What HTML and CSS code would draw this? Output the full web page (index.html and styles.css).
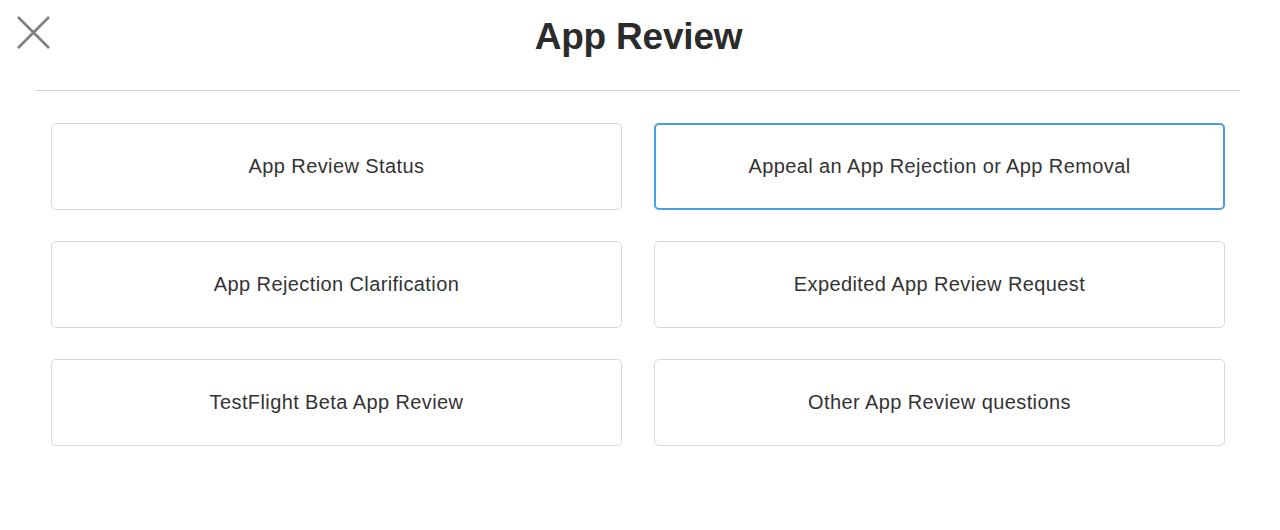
FILE: index.html
```html
<!DOCTYPE html>
<html lang="en">
<head>
    <meta charset="UTF-8">
    <meta name="viewport" content="width=device-width, initial-scale=1.0">
    <title>App Review</title>
    <link rel="stylesheet" href="styles.css">
</head>
<body>
    <div class="page">
        <header class="top-bar">
            <button class="close-button" type="button" aria-label="Close">
                <svg width="33" height="33" viewBox="0 0 33 33">
                    <path d="M1 1 L32 32 M32 1 L1 32" stroke="#7f7f7f" stroke-width="2.6" stroke-linecap="butt" fill="none"/>
                </svg>
            </button>
            <h1>App Review</h1>
            <div></div>
        </header>
        <hr class="divider">
        <div class="topics">
            <a class="topic" href="#">App Review Status</a>
            <a class="topic selected" href="#">Appeal an App Rejection or App Removal</a>
            <a class="topic" href="#">App Rejection Clarification</a>
            <a class="topic" href="#">Expedited App Review Request</a>
            <a class="topic" href="#">TestFlight Beta App Review</a>
            <a class="topic" href="#">Other App Review questions</a>
        </div>
    </div>
</body>
</html>
```

FILE: styles.css
```css
body {
    margin: 0;
    font-family: "Liberation Sans", Arial, sans-serif;
    background-color: #ffffff;
    color: #333333;
}

.page {
    padding: 0 40px 0 35px;
}

.top-bar {
    display: grid;
    grid-template-columns: 1fr auto 1fr;
    align-items: start;
    height: 90px;
}

.close-button {
    justify-self: start;
    margin: 16px 0 0 -18px;
    padding: 0;
    border: none;
    background: none;
    cursor: pointer;
    line-height: 0;
}

h1 {
    margin: 18px 0 0 2px;
    font-size: 37px;
    line-height: 1;
    font-weight: 700;
    letter-spacing: -0.2px;
    color: #2b2b2b;
}

.divider {
    margin: 0;
    border: none;
    border-top: 1px solid #d6d6d6;
}

.topics {
    display: grid;
    grid-template-columns: 571px 571px;
    column-gap: 32px;
    row-gap: 31px;
    padding: 32px 0 0 16px;
}

.topic {
    display: flex;
    justify-content: center;
    align-items: center;
    height: 87px;
    box-sizing: border-box;
    border: 1px solid #d9d9d9;
    border-radius: 5px;
    font-size: 20px;
    letter-spacing: 0.4px;
    color: #333333;
    text-decoration: none;
}

.topic.selected {
    border: 2px solid #4a9fe2;
}
```
